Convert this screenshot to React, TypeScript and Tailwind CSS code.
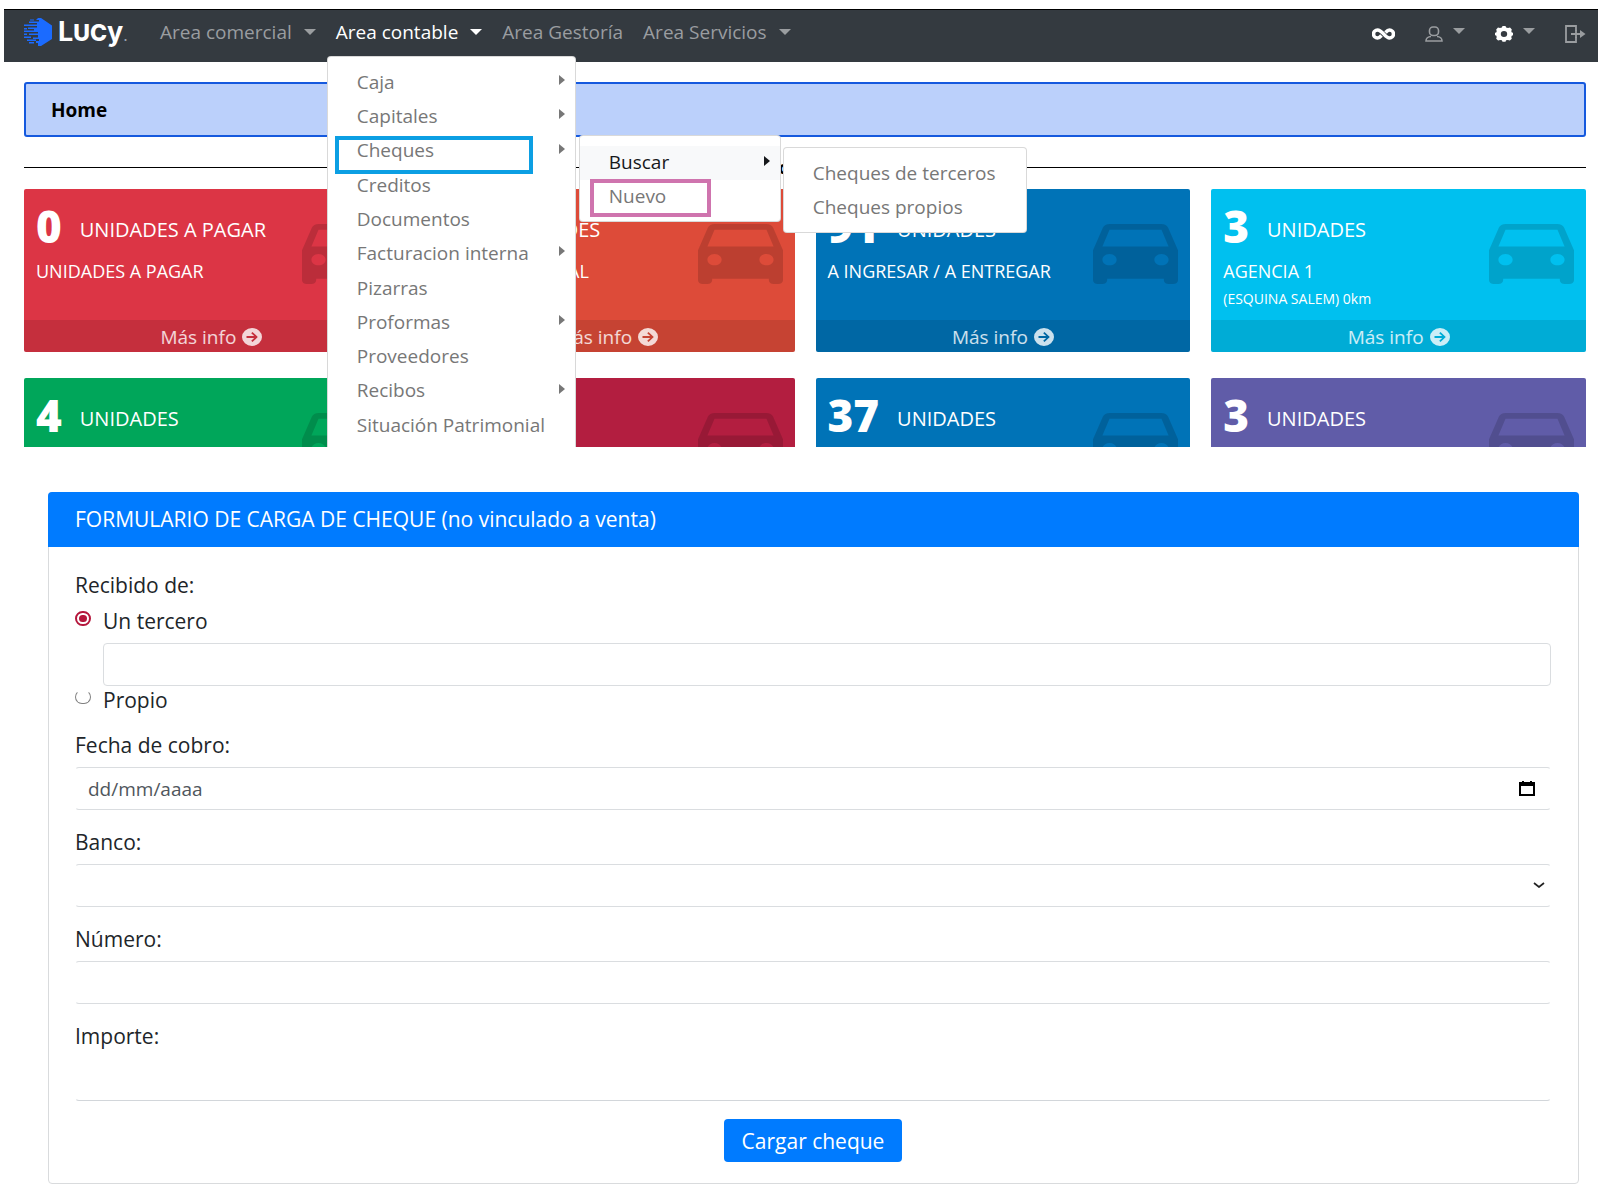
import type { ReactNode } from "react";

type MenuEntry = { label: string; sub?: boolean };

const CONTABLE: MenuEntry[] = [
  { label: "Caja", sub: true },
  { label: "Capitales", sub: true },
  { label: "Cheques", sub: true },
  { label: "Creditos" },
  { label: "Documentos" },
  { label: "Facturacion interna", sub: true },
  { label: "Pizarras" },
  { label: "Proformas", sub: true },
  { label: "Proveedores" },
  { label: "Recibos", sub: true },
  { label: "Situación Patrimonial" },
];

type Unit = { count: string; title: string; place?: string; note?: string; color: string };

const UNITS: Unit[] = [
  { count: "0", title: "UNIDADES A PAGAR", place: "UNIDADES A PAGAR", color: "bg-[#dc3545]" },
  { count: "12", title: "UNIDADES", place: "AGENCIA CENTRAL", color: "bg-[#dd4b39]" },
  { count: "91", title: "UNIDADES", place: "A INGRESAR / A ENTREGAR", color: "bg-[#0073b7]" },
  { count: "3", title: "UNIDADES", place: "AGENCIA 1", note: "(ESQUINA SALEM) 0km", color: "bg-[#00c0ef]" },
  { count: "4", title: "UNIDADES", color: "bg-[#00a65a]" },
  { count: "5", title: "UNIDADES", color: "bg-[#b31e40]" },
  { count: "37", title: "UNIDADES", color: "bg-[#0073b7]" },
  { count: "3", title: "UNIDADES", color: "bg-[#605ca8]" },
];

function Caret({ className = "" }: { className?: string }) {
  return (
    <svg viewBox="0 0 12 6" className={`h-[6px] w-3 shrink-0 ${className}`} fill="currentColor" aria-hidden="true">
      <path d="M0 0h12L6 6z" />
    </svg>
  );
}

function Arrow() {
  return (
    <svg viewBox="0 0 6 10" className="mb-1 h-[10px] w-[6px] shrink-0" fill="currentColor" aria-hidden="true">
      <path d="M0 0v10l6-5z" />
    </svg>
  );
}

function Logo() {
  return (
    <svg viewBox="0 0 28 28" className="h-7 w-7 shrink-0" fill="#1b6bff" aria-hidden="true">
      <path d="M14 0h3l11 7.500v13.500L17 28h-3v-3h-2v-2h3v-2H9v-1.500h5V17H5v-1.500h9V14H0v-1.500h10V11H4V9.500h9V8H0V6.500h13V5H5V3.500h10V2h-3z" />
      <path d="M0 10h3v1.500H0zM0 15.500h3V17H0zM0 18.500h7V20H0zM3 21.500h9V23H3zM6 2.500h4v-1H6zM5 24h5v1.500H5z" />
    </svg>
  );
}

function Car() {
  return (
    <svg
      viewBox="3 5 18 16"
      preserveAspectRatio="none"
      className="absolute right-3 top-[35px] h-[60px] w-[85px] fill-black/15"
      aria-hidden="true"
    >
      <path d="M18.92 6.010C18.720 5.420 18.160 5 17.500 5h-11c-.660 0-1.210.420-1.420 1.010L3 12v8c0 .550.450 1 1 1h1c.550 0 1-.450 1-1v-.400h12v.400c0 .550.450 1 1 1h1c.550 0 1-.450 1-1v-8l-2.080-5.990zM6.500 16c-.830 0-1.500-.670-1.500-1.500S5.670 13 6.500 13s1.500.670 1.500 1.500S7.330 16 6.500 16zm11 0c-.830 0-1.500-.670-1.500-1.500s.670-1.500 1.500-1.500 1.500.670 1.500 1.500-.670 1.500-1.500 1.500zM5 11l1.500-4.500h11L19 11H5z" />
    </svg>
  );
}

function CircleArrow() {
  return (
    <svg viewBox="0 0 20 18" preserveAspectRatio="none" className="h-[18px] w-5" aria-hidden="true">
      <path
        fill="currentColor"
        fillRule="evenodd"
        d="M10 0a10 9 0 1 1 0 18a10 9 0 0 1 0-18zM4.500 8v2h7.700l-3 2.800 1.300 1.300L15.800 9l-5.300-5.100-1.300 1.300 3 2.800z"
      />
    </svg>
  );
}

function UnitCard({ unit }: { unit: Unit }) {
  return (
    <article
      className={`relative flex flex-col overflow-hidden rounded-t-[2px] text-white ${unit.place ? "rounded-b-[2px]" : ""} ${unit.color}`}
    >
      <Car />
      <div className="flex-1 px-3 pt-[10px]">
        <h3 className="flex gap-[18px] leading-[54px]">
          <span className="text-[44px] font-extrabold">{unit.count}</span>
          <span className="pt-1 text-xl font-medium leading-[53px]">{unit.title}</span>
        </h3>
        {unit.place && <p className="text-lg font-medium leading-[30px]">{unit.place}</p>}
        {unit.note && <p className="mt-[3px] text-sm font-medium leading-5">{unit.note}</p>}
      </div>
      {unit.place && (
        <a href="#info" className="flex h-8 items-center justify-center gap-[6px] bg-black/10 pt-px text-[19px] leading-8 text-white/80">
          Más info
          <CircleArrow />
        </a>
      )}
    </article>
  );
}

function NavButton({ children, active, caret = true }: { children: ReactNode; active?: boolean; caret?: boolean }) {
  return (
    <button
      type="button"
      className={`flex h-11 items-center gap-3 whitespace-nowrap text-[19px] ${active ? "font-medium text-white" : "text-[#9a9da0]"}`}
    >
      {children}
      {caret && <Caret />}
    </button>
  );
}

function Navbar() {
  return (
    <nav className="relative z-10 ml-1 mr-[2px] mt-[9px] flex h-[53px] items-start justify-between border-t border-black bg-[#343a40] pl-5 pr-3">
      <div className="flex items-start">
        <a href="#inicio" className="flex h-11 w-[106px] items-center gap-[6px] text-white">
          <Logo />
          <span className="whitespace-nowrap font-['Inter',sans-serif] text-[27px] font-bold leading-7">
            L<span className="text-[23px] font-extrabold">UC</span>y
            <span className="text-xs text-gray-400">.</span>
          </span>
        </a>
        <ul className="ml-[30px] flex gap-5">
          <li>
            <NavButton>Area comercial</NavButton>
          </li>
          <li className="relative">
            <NavButton active>Area contable</NavButton>
            <ContableMenu />
          </li>
          <li>
            <NavButton caret={false}>Area Gestoría</NavButton>
          </li>
          <li>
            <NavButton>Area Servicios</NavButton>
          </li>
        </ul>
      </div>
      <div className="flex h-12 items-center text-[#9a9da0]">
        <button type="button" aria-label="Ilimitado" className="mr-[30px] text-white">
          <svg viewBox="0 0 23 12" className="h-3 w-[23px]" fill="none" stroke="currentColor" strokeWidth="3.500" aria-hidden="true">
            <path d="M13.500 4.500C15 2.800 16 2 17.500 2a4 4 0 0 1 0 8c-4.500 0-7-8-12-8a4 4 0 0 0 0 8c1.500 0 2.500-.800 4-2.500" />
          </svg>
        </button>
        <button type="button" aria-label="Usuario" className="mr-[30px] flex items-center gap-[10px]">
          <svg viewBox="0 0 18 16" className="h-4 w-[18px]" fill="none" stroke="currentColor" strokeWidth="1.600" aria-hidden="true">
            <rect x="4.500" y="1" width="9" height="8.500" rx="3.500" />
            <path d="M6 10.500C3 10.500 1 12.500 1 15h16c0-2.500-2-4.500-5-4.500" />
          </svg>
          <Caret className="mb-[6px]" />
        </button>
        <button type="button" aria-label="Configuración" className="mr-[30px] flex items-center gap-[10px]">
          <svg viewBox="0 0 18 16" className="h-4 w-[18px] text-white" fill="currentColor" aria-hidden="true">
            <path
              fillRule="evenodd"
              d="M7.500 0h3l.6 1.500 1.900.6 2-.6 1.800 1.900-.5 1.900.5 1.100 1.200.3v2.600l-1.200.4-.5 1.200.5 1.800-1.900 1.700-2-.5-1.800.4-.6 1.500h-3l-.6-1.500-1.800-.4-2 .5-1.900-1.700.5-1.800L1.200 9.600 0 9.200V6.700l1.200-.3.5-1.100-.5-1.900L3 1.500l2 .6 1.900-.6zM9 5a3.200 3 0 1 0 0 6a3.200 3 0 0 0 0-6z"
            />
          </svg>
          <Caret className="mb-[6px]" />
        </button>
        <button type="button" aria-label="Salir">
          <svg viewBox="0 0 21 18" className="h-[18px] w-[21px]" fill="none" stroke="currentColor" strokeWidth="1.800" aria-hidden="true">
            <path d="M11 6V1H1v16h10v-5" />
            <path d="M6 8h9V5l5.500 4-5.500 4v-3H6z" fill="currentColor" stroke="none" />
            <path d="M11 5v8" />
          </svg>
        </button>
      </div>
    </nav>
  );
}

function ContableMenu() {
  return (
    <div className="absolute -left-[9px] top-[46px] h-[391px] w-[249px] rounded-t border-x border-t border-black/15 bg-white pt-2 text-[19px] text-[#777]">
      <ul className="grid h-[377px] auto-rows-fr">
        {CONTABLE.map((entry) => (
          <li key={entry.label} className="relative">
            <a href="#menu" className="flex h-full items-center justify-between whitespace-nowrap pl-[29px] pr-[10px]">
              {entry.label}
              {entry.sub && <Arrow />}
            </a>
            {entry.label === "Cheques" && (
              <>
                <span className="pointer-events-none absolute left-[7px] top-[2px] h-[38px] w-[198px] border-4 border-[#0c9fe3]" />
                <ChequesMenu />
              </>
            )}
          </li>
        ))}
      </ul>
    </div>
  );
}

function ChequesMenu() {
  return (
    <ul className="absolute left-[251px] top-[1px] w-[202px] rounded border border-black/15 bg-white pb-[7px] pt-[10px]">
      <li className="relative bg-[#f8f9fa] text-[#16181b]">
        <a href="#buscar" className="flex h-[34px] items-center justify-between pl-[29px] pr-[10px]">
          Buscar
          <Arrow />
        </a>
        <ul className="absolute left-[203px] top-[1px] w-[244px] rounded border border-black/15 bg-white pb-[7px] pt-[9px] text-[#777]">
          <li>
            <a href="#terceros" className="flex h-[34px] items-center whitespace-nowrap pl-[29px]">
              Cheques de terceros
            </a>
          </li>
          <li>
            <a href="#propios" className="flex h-[34px] items-center whitespace-nowrap pl-[29px]">
              Cheques propios
            </a>
          </li>
        </ul>
      </li>
      <li className="relative">
        <a href="#nuevo" className="flex h-[34px] items-center pl-[29px]">
          Nuevo
        </a>
        <span className="pointer-events-none absolute -top-px left-[10px] h-[38px] w-[121px] border-4 border-[#cf74ae]" />
      </li>
    </ul>
  );
}

const LABEL = "block text-[21px] leading-7";
const FIELD = "block h-[43px] w-full rounded border bg-white px-3 text-[19px]";

function ChequeForm() {
  return (
    <form className="ml-12 mr-[21px] mt-[45px] rounded border border-[#d9dbdd] text-[#212529]">
      <h2 className="-mx-px -mt-px rounded-t bg-[#007bff] px-[27px] text-[21px] font-medium leading-[55px] text-white">
        FORMULARIO DE CARGA DE CHEQUE (no vinculado a venta)
      </h2>
      <div className="pb-[21px] pl-[26px] pr-[27px] pt-6">
        <fieldset>
          <legend className={LABEL}>Recibido de:</legend>
          <div className="mt-2 flex items-start gap-3">
            <input
              id="tercero"
              type="radio"
              name="origen"
              defaultChecked
              className="mt-1 h-[15px] w-4 appearance-none rounded-full border-2 border-[#b5173c] bg-white bg-clip-content p-[2px] checked:bg-[#b5173c]"
            />
            <label htmlFor="tercero" className={LABEL}>
              Un tercero
            </label>
          </div>
          <div className="ml-7 mt-2">
            <input aria-label="Nombre del tercero" type="text" className={`${FIELD} border-[#dadde0]`} />
          </div>
          <div className="flex items-start gap-3">
            <input
              id="propio"
              type="radio"
              name="origen"
              className="mt-1 h-[14px] w-4 appearance-none rounded-full border border-[#808080] border-t-transparent bg-white"
            />
            <label htmlFor="propio" className={LABEL}>
              Propio
            </label>
          </div>
        </fieldset>
        <label htmlFor="fecha" className={`${LABEL} mt-[17px]`}>
          Fecha de cobro:
        </label>
        <div className="relative mt-2">
          <input id="fecha" type="text" placeholder="dd/mm/aaaa" className={`${FIELD} border-x-transparent border-y-[#dadde0] placeholder:text-[#50565c]`} />
          <svg viewBox="0 0 16 15" className="absolute right-4 top-[14px] h-[15px] w-4" aria-hidden="true">
            <path fillRule="evenodd" d="M3 0h2v1h6V0h2v1h3v14H0V1h3zM2 5v8h12V5z" />
          </svg>
        </div>
        <label htmlFor="banco" className={`${LABEL} mt-[18px]`}>
          Banco:
        </label>
        <div className="relative mt-2">
          <select id="banco" className={`${FIELD} appearance-none border-x-transparent border-y-[#dadde0]`} />
          <svg viewBox="0 0 12 6" className="absolute right-[6px] top-[18px] h-[6px] w-3" fill="none" stroke="#222" strokeWidth="1.700" aria-hidden="true">
            <path d="M1 1l5 4 5-4" />
          </svg>
        </div>
        <label htmlFor="numero" className={`${LABEL} mt-[18px]`}>
          Número:
        </label>
        <input id="numero" type="text" className={`${FIELD} mt-2 border-x-transparent border-y-[#dadde0]`} />
        <label htmlFor="importe" className={`${LABEL} mt-[18px]`}>
          Importe:
        </label>
        <input id="importe" type="text" className={`${FIELD} mt-2 border-x-transparent border-b-[#d2d6da] border-t-transparent`} />
        <button type="button" className="mx-auto mt-[18px] block h-[43px] rounded bg-[#007bff] px-[18px] text-[21px] leading-7 text-white">
          Cargar cheque
        </button>
      </div>
    </form>
  );
}

export default function App() {
  return (
    <div className="flow-root min-h-screen bg-white font-['Open_Sans','Noto_Sans',sans-serif]">
      <Navbar />
      <main>
        <div className="ml-6 mr-[14px]">
          <div className="mt-5 rounded-[3px] border-2 border-[#1559de] bg-[#bbd0fb] px-[25px] pt-px text-[19px] font-bold leading-[50px] text-black">
            Home
          </div>
          <div className="mt-4 flex h-7 items-center">
            <hr className="flex-1 border-black" />
            <h1 className="mr-11 text-lg font-bold text-black">c</h1>
            <hr className="flex-1 border-black" />
          </div>
          <section className="mt-2 grid grid-cols-4 grid-rows-[163px_69px] gap-x-[21px] gap-y-[26px]">
            {UNITS.map((unit, i) => (
              <UnitCard key={i} unit={unit} />
            ))}
          </section>
        </div>
        <ChequeForm />
      </main>
    </div>
  );
}
